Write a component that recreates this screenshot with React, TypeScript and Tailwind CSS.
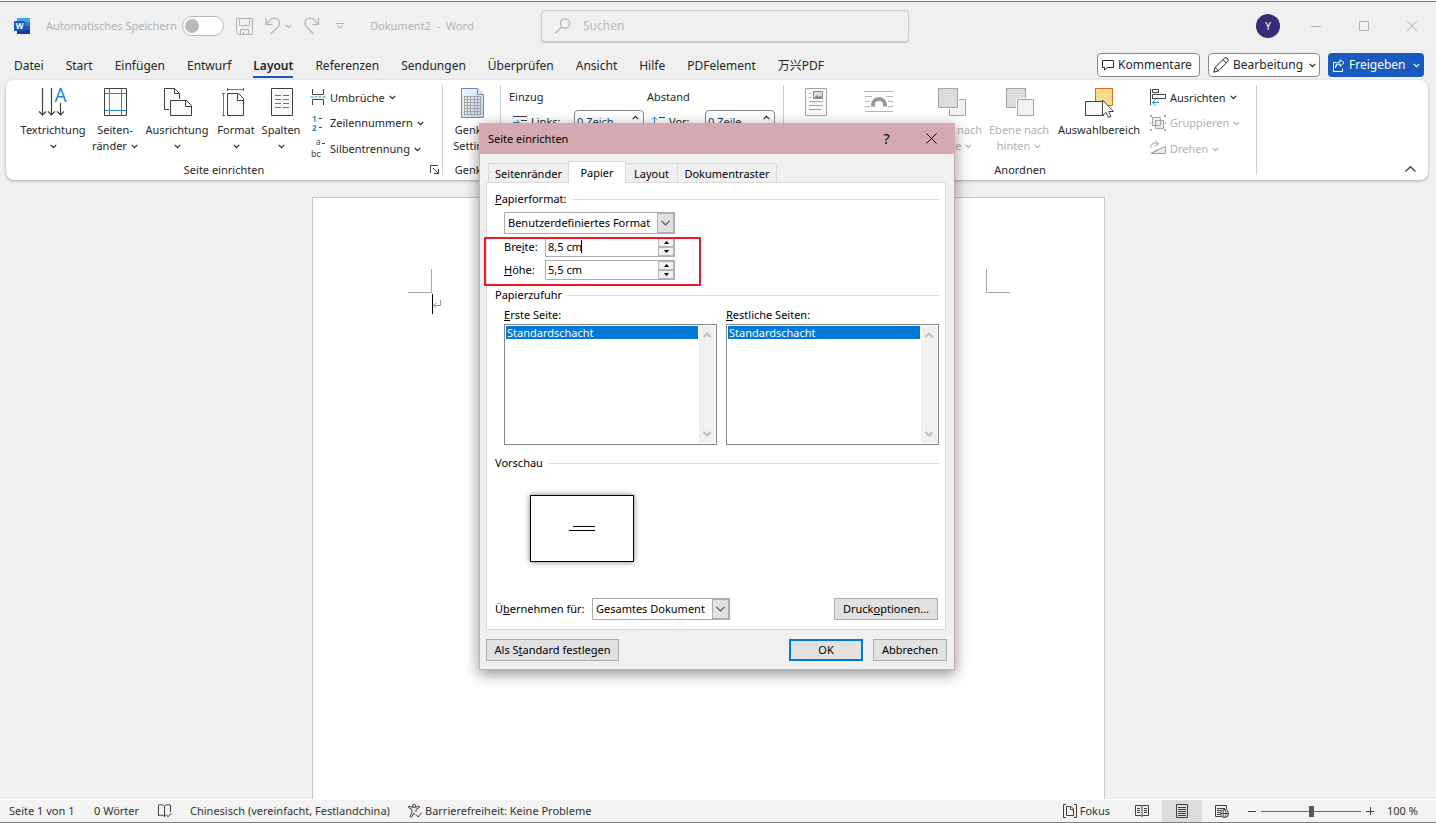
import React from "react";
import type { ReactNode } from "react";

type KidsProps = { children?: ReactNode };

function Chevron({ className = "" }: { className?: string }) {
  return (
    <svg width="7" height="5" viewBox="0 0 7 5" fill="none" stroke="currentColor" strokeWidth="1.2" className={`shrink-0 ${className}`} aria-hidden="true">
      <path d="M0.7 0.8 3.5 3.6 6.3 0.8" />
    </svg>
  );
}

function WordLogo() {
  return (
    <svg width="16" height="16" viewBox="0 0 16 16" aria-hidden="true">
      <rect x="3" y="0" width="13" height="4" fill="#41a5ee" />
      <rect x="3" y="4" width="13" height="4" fill="#2b7cd3" />
      <rect x="3" y="8" width="13" height="4" fill="#185abd" />
      <rect x="3" y="12" width="13" height="4" fill="#103f91" />
      <rect x="0" y="3" width="11" height="10" rx="1" fill="#185abd" />
      <text x="5.5" y="11" textAnchor="middle" fontSize="8" fontWeight="700" fill="#fff" fontFamily="Noto Sans, sans-serif">W</text>
    </svg>
  );
}

/* ---------- Title bar ---------- */

function TitleBar() {
  return (
    <header className="flex h-12 items-center text-[#b4b4b4]">
      <div className="flex w-[541px] shrink-0 items-center pl-[14px]">
        <WordLogo />
        <span className="ml-4 w-[136px] text-[11px] whitespace-nowrap">Automatisches Speichern</span>
        <button role="switch" aria-checked="false" aria-label="Automatisches Speichern" className="flex h-5 w-[42px] items-center rounded-full border border-[#b8b8b8] bg-white px-[2px]">
          <span className="size-[14px] rounded-full bg-[#b9b9b9]" />
        </button>
        <button aria-label="Speichern" className="ml-3">
          <svg width="17" height="17" viewBox="0 0 17 17" fill="none" stroke="currentColor">
            <path d="M0.5 0.5H16.5V16.5H2.5L0.5 14.5ZM3.5 0.5V7.5H13.5V0.5M4.5 16.5V11.5H12.5V16.5M7.5 16V14" />
          </svg>
        </button>
        <button aria-label="Rückgängig" className="ml-3">
          <svg width="16" height="18" viewBox="0 0 16 18" fill="none" stroke="currentColor" strokeWidth="1.2">
            <path d="M1 1V7.5H7.5M1 7.5 5 3.2C9-1 14.500 2 14.500 6.300C14.500 8.500 13.500 9.500 12.500 10.500L5.500 17" />
          </svg>
        </button>
        <Chevron className="ml-1" />
        <button aria-label="Wiederholen" className="ml-3">
          <svg width="16" height="18" viewBox="0 0 16 18" fill="none" stroke="currentColor" strokeWidth="1.2">
            <path d="M14.500 1V7.500H8M14.500 7.500 10.500 3.200C6.500-1 1 2 1 6.300C1 8.500 2 9.500 3 10.500L9.500 17" />
          </svg>
        </button>
        <button aria-label="Symbolleiste anpassen" className="ml-4">
          <svg width="8" height="6" viewBox="0 0 8 6" fill="none" stroke="currentColor">
            <path d="M0 0.500H8M1 2.500 4 5 7 2.500" />
          </svg>
        </button>
        <h1 className="ml-[26px] text-[11px] whitespace-pre">Dokument2  -  Word</h1>
      </div>
      <label className="flex h-8 w-[368px] items-center rounded border border-[#cfcfcf] bg-[#f0f0f0] pl-[13px] shadow-[0_1px_1px_rgba(0,0,0,0.18)]">
        <svg width="16" height="16" viewBox="0 0 16 16" fill="none" stroke="currentColor" strokeWidth="1.2" className="shrink-0" aria-hidden="true">
          <circle cx="10" cy="5.500" r="4.600" />
          <path d="M6.700 8.800 0.500 15" />
        </svg>
        <input aria-label="Suchen" placeholder="Suchen" className="ml-3 w-full bg-transparent text-xs outline-none placeholder:text-[#bcbcbc]" />
      </label>
      <div className="ml-auto flex items-center">
        <button aria-label="Konto" className="mr-3 flex size-6 items-center justify-center rounded-full bg-[#372d77] text-[10px] text-white">Y</button>
        <button aria-label="Minimieren" className="flex w-12 justify-center">
          <svg width="10" height="10" stroke="currentColor"><path d="M0 5.500H10" /></svg>
        </button>
        <button aria-label="Maximieren" className="flex w-12 justify-center">
          <svg width="10" height="10" fill="none" stroke="currentColor"><path d="M0.500 0.500H9.500V9.500H0.500Z" /></svg>
        </button>
        <button aria-label="Schließen" className="flex w-12 justify-center">
          <svg width="10" height="10" stroke="currentColor"><path d="M0 0 10 10M10 0 0 10" /></svg>
        </button>
      </div>
    </header>
  );
}

/* ---------- Ribbon tabs ---------- */

const tabs = ["Datei", "Start", "Einfügen", "Entwurf", "Layout", "Referenzen", "Sendungen", "Überprüfen", "Ansicht", "Hilfe", "PDFelement", "万兴PDF"];

function RibbonTabs() {
  return (
    <div className="flex h-[30px] items-center justify-between pr-3 pl-[14px] text-[#262626]">
      <nav className="flex gap-[22px] pt-1 text-xs leading-5 whitespace-nowrap">
        {tabs.map((tab) => (
          <button key={tab} className={tab === "Layout" ? "border-b-2 border-[#185abd] font-semibold" : "border-b-2 border-transparent"}>
            {tab}
          </button>
        ))}
      </nav>
      <div className="flex gap-2 text-xs whitespace-nowrap">
        <button className="flex h-6 w-[103px] items-center rounded border border-[#8a8a8a] bg-white pl-1">
          <svg width="12" height="12" viewBox="0 0 12 12" fill="none" stroke="currentColor" className="mr-1" aria-hidden="true">
            <path d="M0.500 1.500H11.500V8.500H5.500L2.500 11V8.500H0.500Z" />
          </svg>
          Kommentare
        </button>
        <button className="flex h-6 w-28 items-center rounded border border-[#8a8a8a] bg-white pl-1">
          <svg width="16" height="16" viewBox="0 0 16 16" fill="none" stroke="currentColor" className="mr-1" aria-hidden="true">
            <path d="M0.800 15.200 2 10.500 11.500 1.200Q13 0 14.500 1.500 16 3 14.700 4.500L5.500 13.800ZM10 2.700 13.300 6M2 10.500 5.500 13.800" />
          </svg>
          Bearbeitung
          <Chevron className="ml-auto mr-[3px]" />
        </button>
        <button className="flex h-6 w-24 items-center rounded bg-[#185abd] pl-1 text-white">
          <svg width="13" height="13" viewBox="0 0 13 13" fill="none" stroke="currentColor" className="mr-1" aria-hidden="true">
            <path d="M4.500 3.500H1.500V12.500H10.500V9.500M3.500 9C4 6 5.500 5 8 5V7.500L12 3.800 8 0.800V3C5 3.200 3.500 5.500 3.500 9Z" />
          </svg>
          Freigeben
          <Chevron className="ml-auto mr-1" />
        </button>
      </div>
    </div>
  );
}

/* ---------- Ribbon icons ---------- */

const ink = "#404040";
const blue = "#1e8bcd";

function Svg32({ children }: KidsProps) {
  return (
    <svg width="32" height="32" viewBox="0 0 32 32" fill="none" stroke={ink} className="overflow-visible" aria-hidden="true">
      {children}
    </svg>
  );
}

const TextDirIcon = () => (
  <Svg32>
    <path d="M5.500 1V28M2 24.500 5.500 28 9 24.500M14.500 1V28M11 24.500 14.500 28 18 24.500M23.500 16V28M20 24.500 23.500 28 27 24.500" strokeWidth="1.200" />
    <text x="23.500" y="15" textAnchor="middle" fontSize="19" stroke="none" fill={blue} fontFamily="Noto Sans, sans-serif">A</text>
  </Svg32>
);
const MarginsIcon = () => (
  <Svg32>
    <path d="M5.500 1.500H27.500V28.500H5.500Z" fill="#fafafa" />
    <path d="M10.500 2V28M22.500 2V28M6 6.500H27M6 23.500H27" stroke={blue} />
  </Svg32>
);
const OrientationIcon = () => (
  <Svg32>
    <path d="M3.500 1.500H13.500L18.500 6.500V22.500H3.500Z" fill="#fafafa" />
    <path d="M13.500 1.500V6.500H18.500" />
    <path d="M9.500 13.500H25.500L30.500 18.500V28.500H9.500Z" fill="#fafafa" stroke="#fff" strokeWidth="3" />
    <path d="M9.500 13.500H25.500L30.500 18.500V28.500H9.500Z" fill="#fafafa" />
    <path d="M24.500 13.500V19.500H30.500" />
  </Svg32>
);
const SizeIcon = () => (
  <Svg32>
    <path d="M7.500 6.500H18.500L23.500 11.500V28.500H7.500Z" fill="#fafafa" />
    <path d="M17.500 6.500V13.500H23.500" />
    <path d="M7.500 2.500H23.500M7.500 1V4M23.500 1V4M3.500 6.500V28.500M2 6.500H5M2 28.500H5" stroke={blue} />
  </Svg32>
);
const ColumnsIcon = () => (
  <Svg32>
    <path d="M6.500 1.500H27.500V28.500H6.500Z" fill="#fafafa" />
    <path d="M10 8.500H16M18 8.500H24M10 12.500H16M18 12.500H24M10 16.500H16M18 16.500H24M10 20.500H16M18 20.500H24" stroke={blue} />
  </Svg32>
);
const GenkoIcon = () => (
  <svg width="32" height="32" viewBox="0 0 32 32" fill="none" aria-hidden="true">
    <defs>
      <linearGradient id="sheet" x1="0" y1="0" x2="1" y2="1">
        <stop offset="0" stopColor="#f6f9fe" />
        <stop offset="1" stopColor="#b9cdec" />
      </linearGradient>
    </defs>
    <path d="M5.500 1.500H21.500L27.500 7.500V30.500H5.500Z" fill="url(#sheet)" stroke="#6f8cb8" />
    <path d="M21.500 1.500V7.500H27.500" fill="#dbe7f8" stroke="#6f8cb8" />
    <path d="M8 9.500H25M8 12.500H25M8 15.500H25M8 18.500H25M8 21.500H25M8 24.500H25M8 27.500H25M8.500 9V28M11.500 9V28M14.500 9V28M18.500 9V28M21.500 9V28M24.500 9V28" stroke="#9a9a9a" strokeWidth="0.800" />
  </svg>
);
const PositionIcon = () => (
  <svg width="32" height="32" viewBox="0 0 32 32" fill="none" stroke="#a3a3a3" aria-hidden="true">
    <path d="M5.500 1.500H26.500V28.500H5.500Z" fill="#fafafa" />
    <path d="M13.500 4.500H22.500V11.500H13.500Z" fill="#e0e0e0" stroke="#8a8a8a" />
    <path d="M14 11 17 8 19 10 20.500 8.500 22.500 11Z" fill="#8a8a8a" stroke="none" />
    <path d="M9 6.500H11M9 10.500H11M9 14.500H23M9 18.500H23M9 22.500H21" />
  </svg>
);
const WrapIcon = () => (
  <svg width="32" height="32" viewBox="0 0 32 32" fill="none" stroke="#b5b5b5" aria-hidden="true">
    <path d="M2 4.500H30M2 9.500H9M23 9.500H30M2 14.500H7M25 14.500H30M2 19.500H7M25 19.500H30M2 24.500H30" />
    <path d="M10 19.500V18A6 6 0 0 1 22 18V19.500" stroke="#9a9a9a" strokeWidth="4" />
  </svg>
);
const ForwardIcon = () => (
  <svg width="32" height="32" viewBox="0 0 32 32" fill="#f2f2f2" stroke="#a3a3a3" aria-hidden="true">
    <path d="M13.500 12.500H29.500V28.500H13.500Z" />
    <path d="M2.500 1.500H21.500V20.500H2.500Z" stroke="#fff" strokeWidth="3" />
    <path d="M2.500 1.500H21.500V20.500H2.500Z" fill="#dcdcdc" />
  </svg>
);
const BackwardIcon = () => (
  <svg width="32" height="32" viewBox="0 0 32 32" fill="#f2f2f2" stroke="#a3a3a3" aria-hidden="true">
    <path d="M3.500 1.500H22.500V20.500H3.500Z" fill="#dcdcdc" />
    <path d="M14.500 12.500H30.500V28.500H14.500Z" stroke="#fff" strokeWidth="3" />
    <path d="M14.500 12.500H30.500V28.500H14.500Z" />
  </svg>
);
const SelectionIcon = () => (
  <Svg32>
    <path d="M12.500 1.500H29.500V18.500H12.500Z" fill="#f8db8f" stroke="#dd6b10" />
    <path d="M2.500 14.500H20.500V28.500H2.500Z" fill="#fafafa" />
    <path d="M19.500 13V28.500L23 25.500 25.500 30.500 28 29.300 25.700 24.500H30.500Z" fill="#fff" />
  </Svg32>
);

function Svg16({ children }: KidsProps) {
  return (
    <svg width="16" height="18" viewBox="0 0 16 18" fill="none" stroke={ink} className="shrink-0 overflow-visible" aria-hidden="true">
      {children}
    </svg>
  );
}

const BreaksIcon = () => (
  <Svg16>
    <path d="M2.500 0V5.500H13.500V0M2.500 16V10.500H13.500V16" />
    <path d="M0.500 8H15.500" stroke={blue} strokeDasharray="3 1" />
  </Svg16>
);
const LineNumbersIcon = () => (
  <Svg16>
    <text x="2" y="7" fontSize="8" fontWeight="700" stroke="none" fill={blue} fontFamily="Noto Sans, sans-serif">1</text>
    <text x="2" y="16" fontSize="8" fontWeight="700" stroke="none" fill={blue} fontFamily="Noto Sans, sans-serif">2</text>
    <path d="M9 3.500H12M9 12.500H12" />
  </Svg16>
);
const HyphenIcon = () => (
  <Svg16>
    <text x="6" y="5" fontSize="8" stroke="none" fill="#444" fontFamily="Noto Sans, sans-serif">a</text>
    <text x="1" y="17" fontSize="9" stroke="none" fill="#444" fontFamily="Noto Sans, sans-serif">bc</text>
    <path d="M12 3.500H15" />
  </Svg16>
);
const AlignIcon = () => (
  <Svg16>
    <path d="M0.500 0V16M2.500 0.500H8.500V3.500H2.500ZM2.500 5.500H15.500V9.500H2.500Z" />
    <path d="M2.500 13.500H9M5.500 10.500 2.500 13.500 5.500 16.500" stroke={blue} />
  </Svg16>
);
const GroupIcon = () => (
  <svg width="16" height="18" viewBox="0 0 16 18" fill="none" stroke="#a3a3a3" className="shrink-0" aria-hidden="true">
    <path d="M2.500 2.500H10.500V10.500H2.500ZM5.500 5.500H13.500V13.500H5.500Z" fill="#ececec" />
    <path d="M0 1H2M14 1H16M0 15H2M14 15H16M0 8H1M15 8H16" strokeWidth="2" />
    <path d="M5.500 5.500H10.500V10.500H5.500Z" />
  </svg>
);
const RotateIcon = () => (
  <svg width="16" height="18" viewBox="0 0 16 18" fill="none" stroke="#a3a3a3" className="shrink-0" aria-hidden="true">
    <path d="M1.500 13.500 15.500 6V13.500Z" fill="#ececec" />
    <path d="M1 8C0 4 4 2 7.500 3.500M5 0.500 8.500 3.700 5 6.500M0.500 13.500 8 9.500" />
  </svg>
);

/* ---------- Ribbon ---------- */

type BigProps = { icon: ReactNode; width: string; line1?: string; line2?: string; menu?: boolean; disabled?: boolean; name?: string };

function BigButton({ icon, width, line1, line2, menu, disabled, name }: BigProps) {
  return (
    <button disabled={disabled} aria-label={name} className={`flex shrink-0 flex-col items-center leading-4 whitespace-nowrap disabled:text-[#b1b1b1] ${width}`}>
      <span className="h-[35px]">{icon}</span>
      <span>{line1}</span>
      {(line2 || menu) && (
        <span className="flex h-4 items-center gap-1">
          {line2}
          {menu && <Chevron />}
        </span>
      )}
    </button>
  );
}

function SmallButton({ icon, label, disabled }: { icon: ReactNode; label: string; disabled?: boolean }) {
  return (
    <button disabled={disabled} className="flex h-[26px] items-center whitespace-nowrap disabled:text-[#b1b1b1]">
      {icon}
      <span className="mr-1 ml-1">{label}</span>
      <Chevron />
    </button>
  );
}

function Group({ label, width, children }: KidsProps & { label?: string; width: string }) {
  return (
    <section className={`relative my-[5px] flex shrink-0 flex-col border-r border-[#d0d0d0] ${width}`}>
      <div className="flex h-[77px] shrink-0">{children}</div>
      <div className="text-center leading-4">{label}</div>
    </section>
  );
}

function RibbonSpin({ label, value, icon, labelWidth }: { label: string; value: string; icon: ReactNode; labelWidth: string }) {
  return (
    <label className="flex h-6 items-center">
      {icon}
      <span className={`shrink-0 pl-1 ${labelWidth}`}>{label}</span>
      <span className="flex h-6 w-[70px] shrink-0 rounded border border-[#8a8a8a] bg-white pr-1">
        <input defaultValue={value} className="w-full min-w-0 bg-transparent pl-[2px] text-[#1f3864] outline-none" />
        <Chevron className="mt-1 rotate-180" />
      </span>
    </label>
  );
}

function Ribbon() {
  return (
    <div className="relative mr-2 ml-[6px] flex h-[100px] rounded-lg bg-white text-[11px] text-[#262626] shadow-[0_1px_3px_rgba(0,0,0,0.3)]">
      <Group width="w-[437px]" label="Seite einrichten">
        <div className="flex pt-[2px] pl-3">
          <BigButton width="w-[70px]" icon={<TextDirIcon />} line1="Textrichtung" menu />
          <BigButton width="w-[54px]" icon={<MarginsIcon />} line1="Seiten-" line2="ränder" menu />
          <BigButton width="w-[70px]" icon={<OrientationIcon />} line1="Ausrichtung" menu />
          <BigButton width="w-12" icon={<SizeIcon />} line1="Format" menu />
          <BigButton width="w-[42px]" icon={<ColumnsIcon />} line1="Spalten" menu />
        </div>
        <div className="ml-2 flex flex-col">
          <SmallButton icon={<BreaksIcon />} label="Umbrüche" />
          <SmallButton icon={<LineNumbersIcon />} label="Zeilennummern" />
          <SmallButton icon={<HyphenIcon />} label="Silbentrennung" />
        </div>
        <button aria-label="Seite einrichten öffnen" className="absolute right-[3px] bottom-px">
          <svg width="9" height="9" fill="none" stroke={ink}><path d="M0.500 8V0.500H8M3 3 8 8M8.500 4V8.500H4" /></svg>
        </button>
      </Group>
      <Group width="w-[58px]" label="Genko">
        <div className="flex w-full justify-center pt-[2px]">
          <BigButton width="w-12" icon={<GenkoIcon />} line1="Genko" line2="Setting" />
        </div>
      </Group>
      <Group width="w-[283px]">
        <div className="w-[138px] pl-2">
          <h2 className="h-[25px] leading-6">Einzug</h2>
          <div className="pl-1">
            <RibbonSpin
              label="Links:"
              labelWidth="w-[47px]"
              value="0 Zeich"
              icon={<svg width="14" height="12" fill="none" stroke={ink} className="shrink-0" aria-hidden="true"><path d="M0 0.500H14M8 4.500H14M8 8.500H14" /><path d="M0 6.500H6M4 4 6 6.500 4 9" stroke={blue} /></svg>}
            />
          </div>
        </div>
        <div className="w-[138px] pl-2">
          <h2 className="h-[25px] leading-6">Abstand</h2>
          <div className="pl-1">
            <RibbonSpin
              label="Vor:"
              labelWidth="w-10"
              value="0 Zeile"
              icon={<svg width="14" height="12" fill="none" stroke={ink} className="shrink-0" aria-hidden="true"><path d="M8 1.500H14M8 8.500H14" /><path d="M3.500 12V1M1 3.500 3.500 1 6 3.500" stroke={blue} /></svg>}
            />
          </div>
        </div>
      </Group>
      <Group width="w-[473px]" label="Anordnen">
        <div className="flex pt-[2px]">
          <BigButton width="w-16" icon={<PositionIcon />} name="Position" disabled />
          <BigButton width="w-[62px]" icon={<WrapIcon />} name="Textumbruch" disabled />
          <div className="ml-2 flex">
            <BigButton width="w-[68px]" icon={<ForwardIcon />} line1="Ebene nach" line2="vorne" menu disabled />
            <BigButton width="w-[66px]" icon={<BackwardIcon />} line1="Ebene nach" line2="hinten" menu disabled />
          </div>
          <BigButton width="w-[94px]" icon={<SelectionIcon />} line1="Auswahlbereich" />
        </div>
        <div className="ml-1 flex flex-col">
          <SmallButton icon={<AlignIcon />} label="Ausrichten" />
          <SmallButton icon={<GroupIcon />} label="Gruppieren" disabled />
          <SmallButton icon={<RotateIcon />} label="Drehen" disabled />
        </div>
      </Group>
      <button aria-label="Menüband reduzieren" className="absolute right-3 bottom-2">
        <svg width="11" height="6" fill="none" stroke={ink} strokeWidth="1.300"><path d="M0.500 5.500 5.500 0.700 10.500 5.500" /></svg>
      </button>
    </div>
  );
}

/* ---------- Document ---------- */

function DocumentArea() {
  return (
    <main className="flex flex-1 justify-center bg-[#f0f0f0] pt-[17px] pr-[19px]">
      <div className="w-[793px] border border-b-0 border-[#c8c8c8] bg-white pt-[71px] pr-[94px] pl-[95px]">
        <div className="flex justify-between">
          <span className="size-6 border-r border-b border-[#a6a6a6]" />
          <span className="size-6 border-b border-l border-[#a6a6a6]" />
        </div>
        <div className="flex items-center pt-px pl-6">
          <span className="h-5 w-px bg-black" />
          <svg width="9" height="9" fill="none" stroke="#9a9a9a" aria-hidden="true"><path d="M7.500 0V5.500H0.500M3 3 0.500 5.500 3 8" /></svg>
        </div>
      </div>
    </main>
  );
}

/* ---------- Status bar ---------- */

function StatusBar() {
  return (
    <footer className="flex h-6 items-center justify-between border-t border-b border-t-white border-b-[#7d7d7d] bg-[#f3f3f3] text-[11px] whitespace-nowrap text-[#333]">
      <div className="flex items-center pl-[9px]">
        <span className="w-[85px]">Seite 1 von 1</span>
        <span className="w-16">0 Wörter</span>
        <svg width="14" height="14" viewBox="0 0 14 14" fill="none" stroke={ink} aria-hidden="true">
          <path d="M6.500 2C5 0.500 3 0.500 0.500 1V11.500C3 11 5 11 6.500 12.500ZM6.500 2C8 0.500 10 0.500 12.500 1V8M6.500 12.500 7.500 11.700M8 10.500 10 12.800 13.500 9" />
        </svg>
        <span className="ml-[18px] w-[218px]">Chinesisch (vereinfacht, Festlandchina)</span>
        <svg width="15" height="14" viewBox="0 0 15 14" fill="none" stroke={ink} aria-hidden="true">
          <circle cx="6" cy="2" r="1.500" />
          <path d="M4.500 3.500 1 2 0.500 3.500 4 5.500V8L2 12.500 3.500 13.200 6 9 7 10.500M7.500 3.500 11 2 11.500 3.500 8 5.500V8M8 10.500 10 13 14 8.500" />
        </svg>
        <span className="ml-[2px]">Barrierefreiheit: Keine Probleme</span>
      </div>
      <div className="flex h-full items-center">
        <button className="flex items-center">
          <svg width="14" height="14" viewBox="0 0 14 14" fill="none" stroke={ink} className="mr-[3px]" aria-hidden="true">
            <path d="M3 0.500H0.500V13.500H3M11 0.500H13.500V13.500H11M3.500 2.500H8L10.500 5V11.500H3.500ZM7.500 2.500V5.500H10.500" />
          </svg>
          Fokus
        </button>
        <button aria-label="Lesemodus" className="ml-3 flex h-full w-10 items-center justify-center">
          <svg width="14" height="14" viewBox="0 0 14 14" fill="none" stroke={ink}>
            <path d="M7 2 6 1.500H0.500V11.500H6L7 12.500 8 11.500H13.500V1.500H8L7 2V12M2 4.500H5M2 6.500H5M2 8.500H5M9 4.500H12M9 6.500H12M9 8.500H12" />
          </svg>
        </button>
        <button aria-label="Seitenlayout" className="flex h-full w-10 items-center justify-center bg-[#dcdcdc]">
          <svg width="12" height="14" viewBox="0 0 12 14" fill="none" stroke={ink}>
            <path d="M0.500 0.500H11.500V13.500H0.500ZM2 3.500H10M2 5.500H10M2 7.500H10M2 9.500H10M2 11.500H10" />
          </svg>
        </button>
        <button aria-label="Weblayout" className="flex h-full w-10 items-center justify-center">
          <svg width="14" height="14" viewBox="0 0 14 14" fill="none" stroke={ink}>
            <path d="M6 12.500H0.500V1.500H11.500V5M2 4.500H10M2 6.500H6M2 8.500H5M2 10.500H5" />
            <circle cx="9.500" cy="9.500" r="4" />
            <path d="M5.500 9.500H13.500M9.500 5.500C7.500 7.500 7.500 11.500 9.500 13.500C11.500 11.500 11.500 7.500 9.500 5.500" />
          </svg>
        </button>
        <button aria-label="Verkleinern" className="ml-[6px]">
          <svg width="8" height="8" stroke={ink}><path d="M0 4.500H8" /></svg>
        </button>
        <input
          type="range"
          aria-label="Zoom"
          defaultValue={50}
          className="mx-[5px] h-3 w-[100px] appearance-none bg-transparent [&::-webkit-slider-runnable-track]:h-px [&::-webkit-slider-runnable-track]:bg-[#6a6a6a] [&::-webkit-slider-thumb]:-mt-[5px] [&::-webkit-slider-thumb]:h-[11px] [&::-webkit-slider-thumb]:w-[5px] [&::-webkit-slider-thumb]:appearance-none [&::-webkit-slider-thumb]:bg-[#5a5a5a]"
        />
        <button aria-label="Vergrößern">
          <svg width="8" height="8" stroke={ink}><path d="M0 4.500H8M4.500 0V8" /></svg>
        </button>
        <span className="ml-[13px] w-[49px]">100 %</span>
      </div>
    </footer>
  );
}

/* ---------- Page setup dialog ---------- */

function SectionTitle({ children }: KidsProps) {
  return (
    <h3 className="flex h-4 items-center leading-4 whitespace-nowrap after:ml-[5px] after:h-px after:flex-1 after:bg-[#dcdcdc]">
      <span>{children}</span>
    </h3>
  );
}

function DropDown({ id, value, width }: { id: string; value: string; width: string }) {
  return (
    <span className={`relative flex h-[22px] border border-[#adadad] bg-white ${width}`}>
      <select id={id} aria-label={value} className="w-full appearance-none pl-[3px] outline-none">
        <option>{value}</option>
      </select>
      <span className="pointer-events-none absolute top-0 right-0 flex h-5 w-[17px] items-center justify-center border border-[#adadad] bg-[#e1e1e1]">
        <svg width="9" height="6" fill="none" stroke="#555" strokeWidth="1.200"><path d="M0.500 0.800 4.500 4.800 8.500 0.800" /></svg>
      </span>
    </span>
  );
}

function SpinBox({ id, value, caret }: { id: string; value: string; caret?: boolean }) {
  return (
    <span className="relative flex h-5 w-[130px] border border-[#adadad] bg-white">
      <input id={id} defaultValue={value} className="w-full min-w-0 pl-[2px] outline-none" />
      {caret && <span className="absolute top-[2px] left-[35px] h-[13px] w-px bg-black" />}
      <span className="flex w-4 shrink-0 flex-col">
        <button aria-label="Erhöhen" className="flex flex-1 items-center justify-center border border-[#b5b5b5] bg-[#f0f0f0]">
          <svg width="5" height="3"><path d="M0 3 2.500 0 5 3Z" /></svg>
        </button>
        <button aria-label="Verringern" className="flex flex-1 items-center justify-center border border-[#b5b5b5] bg-[#f0f0f0]">
          <svg width="5" height="3"><path d="M0 0 2.500 3 5 0Z" /></svg>
        </button>
      </span>
    </span>
  );
}

function TrayList({ id, label }: { id: string; label: ReactNode }) {
  return (
    <div className="w-[213px]">
      <div id={id} className="h-[17px] leading-4">{label}</div>
      <div className="flex h-[121px] border border-[#828790] bg-white p-px">
        <ul role="listbox" aria-labelledby={id} className="flex-1">
          <li role="option" aria-selected="true" className="h-[13px] bg-[#0078d7] pl-px leading-[13px] text-white">Standardschacht</li>
        </ul>
        <div className="ml-px flex w-4 flex-col items-center justify-between bg-[#f0f0f0] py-[6px]">
          <svg width="8" height="6" fill="none" stroke="#bfbfbf" strokeWidth="2"><path d="M0.500 5 4 1.500 7.500 5" /></svg>
          <svg width="8" height="6" fill="none" stroke="#bfbfbf" strokeWidth="2"><path d="M0.500 1 4 4.500 7.500 1" /></svg>
        </div>
      </div>
    </div>
  );
}

function PushButton({ children, width, primary }: KidsProps & { width: string; primary?: boolean }) {
  return (
    <button className={`h-[22px] bg-[#e1e1e1] whitespace-nowrap ${primary ? "border-2 border-[#0078d7]" : "border border-[#adadad]"} ${width}`}>
      {children}
    </button>
  );
}

function PageSetupDialog() {
  return (
    <div role="dialog" aria-labelledby="dlg-title" className="absolute top-[123px] left-[479px] w-[476px] border border-t-0 border-[#d4a9b2] bg-[#f0f0f0] pb-2 text-[11px] text-black shadow-[0_4px_14px_rgba(0,0,0,0.45)]">
      <div className="flex h-[31px] items-center bg-[#d4a9b2] pl-2">
        <h2 id="dlg-title" className="flex-1 pt-px">Seite einrichten</h2>
        <button aria-label="Hilfe" className="w-[45px] text-sm">?</button>
        <button aria-label="Schließen" className="flex w-[45px] justify-center">
          <svg width="11" height="11" stroke="#000"><path d="M0.500 0.500 10.500 10.500M10.500 0.500 0.500 10.500" /></svg>
        </button>
      </div>

      <div className="pt-[7px] pr-2 pl-[6px]">
        <div role="tablist" className="relative -mb-px flex items-end pl-[2px]">
          <button role="tab" className="mb-px h-[19px] w-20 border border-r-0 border-b-0 border-[#d9d9d9] pt-[2px]">Seitenränder</button>
          <button role="tab" aria-selected="true" className="h-[22px] w-[58px] border border-b-0 border-[#d9d9d9] bg-white pt-[2px]">Papier</button>
          <button role="tab" className="mb-px h-[19px] w-[51px] border border-r-0 border-b-0 border-l-0 border-[#d9d9d9] pt-[2px]">Layout</button>
          <button role="tab" className="mb-px h-[19px] w-[100px] border border-b-0 border-[#d9d9d9] pt-[2px]">Dokumentraster</button>
        </div>

        <div className="border border-[#d9d9d9] bg-white pt-2 pr-[6px] pb-[9px] pl-2">
          <SectionTitle><u>P</u>apierformat:</SectionTitle>
          <div className="relative pt-[5px] pl-[9px]">
            <DropDown id="format" value="Benutzerdefiniertes Format" width="w-[171px]" />
            <div className="mt-[3px] flex items-center">
              <label htmlFor="breite" className="w-[41px]">Bre<u>i</u>te:</label>
              <SpinBox id="breite" value="8,5 cm" caret />
            </div>
            <div className="mt-[3px] flex items-center">
              <label htmlFor="hoehe" className="w-[41px]"><u>H</u>öhe:</label>
              <SpinBox id="hoehe" value="5,5 cm" />
            </div>
            <div className="pointer-events-none absolute top-[30px] -left-[11px] h-[49px] w-[217px] border-2 border-[#ed1c24]" />
          </div>

          <div className="mt-[7px]">
            <SectionTitle>Papierzufuhr</SectionTitle>
          </div>
          <div className="mt-1 flex gap-[9px] pl-[9px]">
            <TrayList id="tray-first" label={<><u>E</u>rste Seite:</>} />
            <TrayList id="tray-rest" label={<><u>R</u>estliche Seiten:</>} />
          </div>

          <div className="mt-[10px]">
            <SectionTitle>Vorschau</SectionTitle>
          </div>
          <div className="mt-6 ml-[35px] flex h-[67px] w-[104px] flex-col items-center justify-center gap-[3px] border border-black bg-white shadow-[0_0_6px_rgba(0,0,0,0.5)]">
            <span className="ml-1 h-px w-[22px] bg-black" />
            <span className="h-px w-[26px] bg-black" />
          </div>

          <div className="mt-9 flex items-center pr-px">
            <label htmlFor="apply" className="w-[97px]">Ü<u>b</u>ernehmen für:</label>
            <DropDown id="apply" value="Gesamtes Dokument" width="w-[138px]" />
            <span className="ml-auto flex"><PushButton width="w-[104px]">Druck<u>o</u>ptionen...</PushButton></span>
          </div>
        </div>
      </div>

      <div className="mt-[9px] flex gap-[10px] pr-[7px] pl-[6px]">
        <PushButton width="w-[133px]">Als S<u>t</u>andard festlegen</PushButton>
        <span className="flex-1" />
        <PushButton width="w-[74px]" primary>OK</PushButton>
        <PushButton width="w-[74px]">Abbrechen</PushButton>
      </div>
    </div>
  );
}

export default function App() {
  return (
    <div className="relative flex min-h-screen flex-col bg-[#f0f0f0] font-['Noto_Sans','Noto_Sans_CJK_SC',sans-serif]">
      <div className="h-[2px] border-b border-[#7d7d7d] bg-white" />
      <TitleBar />
      <RibbonTabs />
      <Ribbon />
      <DocumentArea />
      <StatusBar />
      <PageSetupDialog />
    </div>
  );
}
